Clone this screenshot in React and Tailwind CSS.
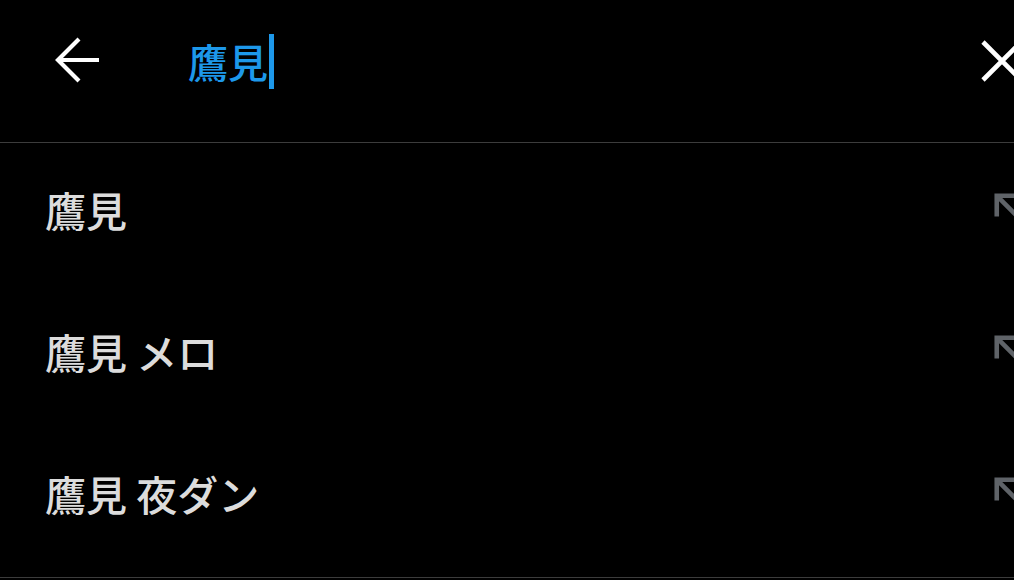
import React from 'react';

const suggestions = ['鷹見', '鷹見 メロ', '鷹見 夜ダン'];

const BackIcon = () => (
  <svg width="50" height="50" viewBox="0 0 50 50" className="block">
    <path d="M47 24H6M27 3L6 24l21 21" fill="none" stroke="#fff" strokeWidth="4.2" />
  </svg>
);

const CloseIcon = () => (
  <svg width="44" height="44" viewBox="0 0 44 44" className="block">
    <path d="M3 3l38 38M41 3L3 41" fill="none" stroke="#fff" strokeWidth="4.6" />
  </svg>
);

const NorthWest = () => (
  <svg width="55" height="55" viewBox="0 0 24 24" className="block">
    <path d="M5 15h2V8.41L18.59 20 20 18.59 8.41 7H15V5H5z" fill="#5f6368" />
  </svg>
);

const App = () => {
  return (
    <div
      className="w-[1014px] h-[580px] bg-black overflow-hidden"
      style={{ fontFamily: '"Noto Sans CJK JP", "Noto Sans", sans-serif' }}
    >
      <div className="h-[143px] border-b border-[#3c3c3c] flex items-center pb-[20px]">
        <div className="pl-[52px] w-[188px] shrink-0">
          <BackIcon />
        </div>
        <div className="flex items-center">
          <span className="text-[40px] leading-none font-medium text-[#1d98ea]">鷹見</span>
          <span className="w-[5px] h-[55px] bg-[#1d98ea] ml-px" />
        </div>
        <div className="ml-auto mr-[-10px]">
          <CloseIcon />
        </div>
      </div>
      <div className="flex flex-col">
        {suggestions.map((s) => (
          <div key={s} className="h-[142px] flex items-center pl-[45px] pb-[10px]">
            <span className="text-[41px] leading-none font-medium text-[#dcdcdc]">{s}</span>
            <div className="ml-auto mr-[-24px]">
              <NorthWest />
            </div>
          </div>
        ))}
        <div className="mt-[8px] border-b border-[#3c3c3c]" />
      </div>
    </div>
  );
};

export default App;
